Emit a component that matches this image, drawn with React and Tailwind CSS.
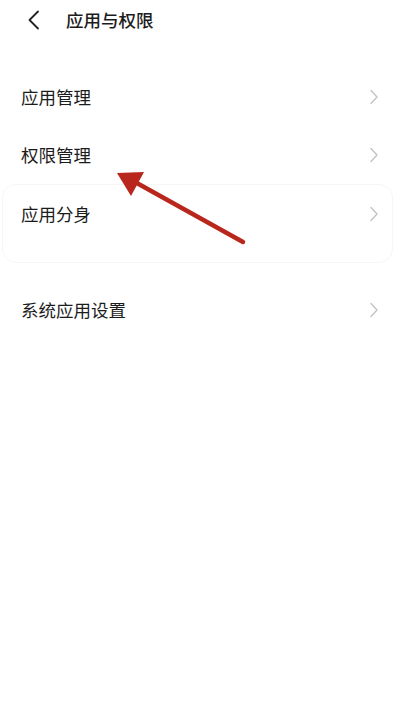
import React from 'react';

const Chevron = () => (
  <svg width="10" height="16" viewBox="0 0 10 16" fill="none">
    <path d="M2 1.5 L8 8 L2 14.5" stroke="#c4c4c4" strokeWidth="1.4" strokeLinecap="round" strokeLinejoin="round" />
  </svg>
);

const Row = ({ label, className = 'pl-[21px] pr-[26px]' }) => (
  <div className={`flex items-center justify-between h-[58px] ${className}`}>
    <span className="text-[17.5px] text-[#1c1c1c]">{label}</span>
    <Chevron />
  </div>
);

export default function App() {
  return (
    <div
      className="relative w-[405px] h-[708px] bg-white overflow-hidden"
      style={{ fontFamily: '"Noto Sans", "Noto Sans CJK SC", sans-serif' }}
    >
      {/* header */}
      <div className="flex items-center h-[40px] pl-[27px]">
        <svg width="14" height="20" viewBox="0 0 14 20" fill="none">
          <path d="M11 1.5 L2.5 10 L11 18.5" stroke="#222" strokeWidth="1.8" strokeLinecap="round" strokeLinejoin="round" />
        </svg>
        <span className="ml-[25px] text-[17.5px] font-medium text-[#1c1c1c]">应用与权限</span>
      </div>

      <div className="mt-[28px]">
        <Row label="应用管理" />
        <Row label="权限管理" />
        <div className="ml-[2px] mr-[12px] rounded-[14px] border border-[#f6f6f6]">
          <Row label="应用分身" className="pl-[18px] pr-[13px]" />
          <div className="h-[19px]" />
        </div>
        <div className="h-[18px]" />
        <Row label="系统应用设置" />
      </div>

      {/* red annotation arrow */}
      <svg className="absolute left-0 top-0" width="405" height="708" viewBox="0 0 405 708">
        <line x1="243" y1="242" x2="126" y2="177" stroke="#b8261c" strokeWidth="4.5" strokeLinecap="round" />
        <path d="M117 173 L144 172 L131 196 Z" fill="#b8261c" />
      </svg>
    </div>
  );
}
